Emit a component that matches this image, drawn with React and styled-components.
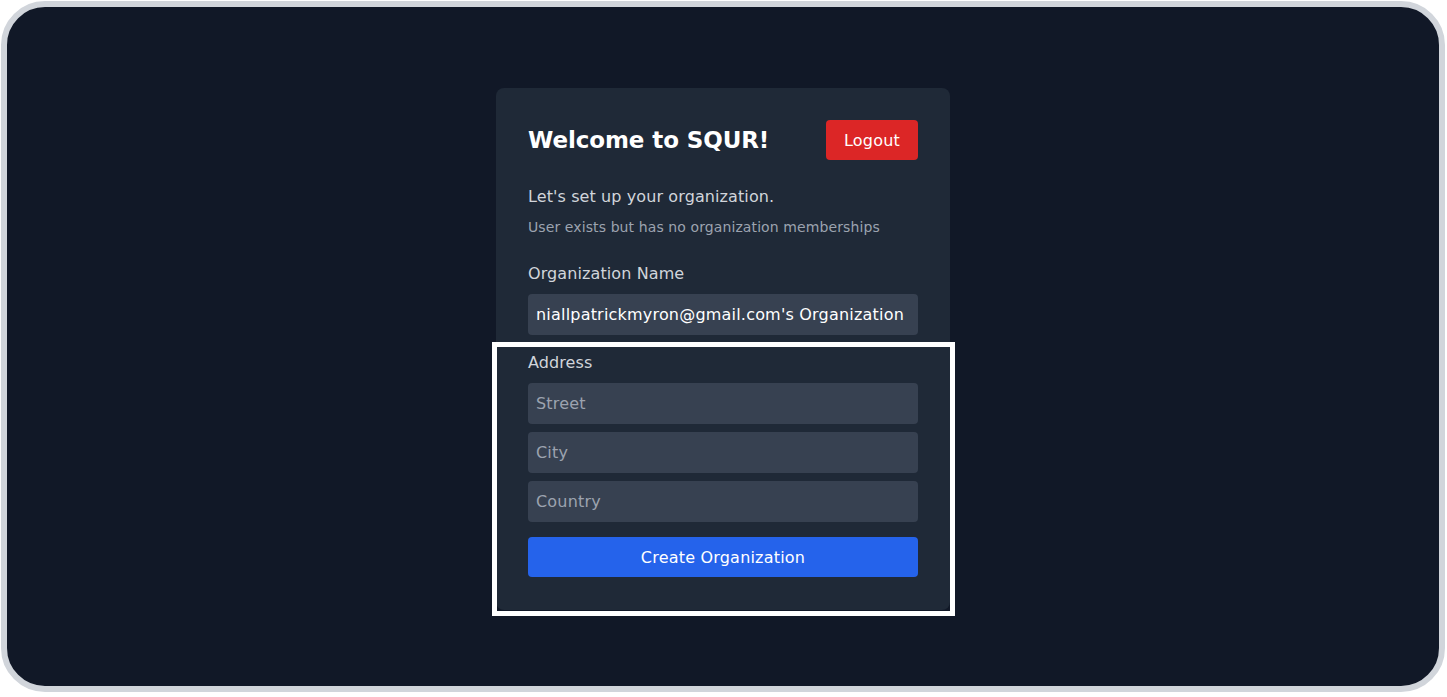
import styled, { createGlobalStyle } from "styled-components";

const GlobalStyle = createGlobalStyle`
  html, body {
    margin: 0;
    padding: 0;
    background: #ffffff;
  }
  body {
    font-family: "DejaVu Sans", "Noto Sans", sans-serif;
  }
  * {
    box-sizing: border-box;
  }
`;

const Frame = styled.div`
  margin: 1px 2px 5px 1px;
  height: 691px;
  border: 6px solid #d1d5db;
  border-radius: 44px;
  background: #111827;
  display: flex;
  justify-content: center;
  padding-top: 81px;
`;

const Card = styled.div`
  position: relative;
  width: 454px;
  height: 522px;
  background: #1f2937;
  border-radius: 8px;
  padding: 32px;
  display: flex;
  flex-direction: column;
`;

const Header = styled.div`
  display: flex;
  align-items: center;
  justify-content: space-between;
  height: 40px;
`;

const Title = styled.h1`
  margin: 0;
  font-size: 23px;
  font-weight: 700;
  color: #ffffff;
  letter-spacing: -0.1px;
`;

const Button = styled.button`
  border: none;
  border-radius: 4px;
  height: 40px;
  font-family: inherit;
  font-size: 16px;
  letter-spacing: 0.2px;
  color: #ffffff;
  background: ${(p) => p.$bg};
  width: ${(p) => (p.$full ? "100%" : "auto")};
  padding: 0 18px;
  cursor: pointer;
`;

const Text = styled.p`
  margin: ${(p) => p.$mt || 0}px 0 0;
  font-size: ${(p) => p.$size}px;
  line-height: ${(p) => (p.$size > 14 ? 24 : 20)}px;
  letter-spacing: 0.1px;
  color: ${(p) => p.$color};
`;

const Field = styled.div`
  display: flex;
  flex-direction: column;
  gap: ${(p) => p.$gap}px;
  margin-top: ${(p) => p.$mt}px;
`;

const Label = styled.label`
  font-size: 16px;
  line-height: 24px;
  letter-spacing: 0.1px;
  color: #d1d5db;
`;

const Input = styled.input`
  height: 41px;
  border: none;
  border-radius: 4px;
  background: #374151;
  padding: 0 8px;
  font-family: inherit;
  font-size: 16px;
  letter-spacing: 0.2px;
  color: #ffffff;
  outline: none;
  &::placeholder {
    color: #9ca3af;
  }
`;

const Highlight = styled.div`
  position: absolute;
  left: -4px;
  top: 254px;
  width: 463px;
  height: 274px;
  border: 5px solid #ffffff;
  pointer-events: none;
`;

export default function App() {
  return (
    <>
      <GlobalStyle />
      <Frame>
        <Card>
          <Header>
            <Title>Welcome to SQUR!</Title>
            <Button $bg="#dc2626">Logout</Button>
          </Header>
          <Text $size={16} $color="#d1d5db" $mt={25}>
            Let's set up your organization.
          </Text>
          <Text $size={14} $color="#9ca3af" $mt={8}>
            User exists but has no organization memberships
          </Text>
          <Field $gap={8} $mt={25}>
            <Label>Organization Name</Label>
            <Input defaultValue="niallpatrickmyron@gmail.com's Organization" />
          </Field>
          <Field $gap={8} $mt={16}>
            <Label>Address</Label>
            <Input placeholder="Street" />
            <Input placeholder="City" />
            <Input placeholder="Country" />
          </Field>
          <Field $gap={0} $mt={15}>
            <Button $bg="#2563eb" $full>
              Create Organization
            </Button>
          </Field>
          <Highlight />
        </Card>
      </Frame>
    </>
  );
}
